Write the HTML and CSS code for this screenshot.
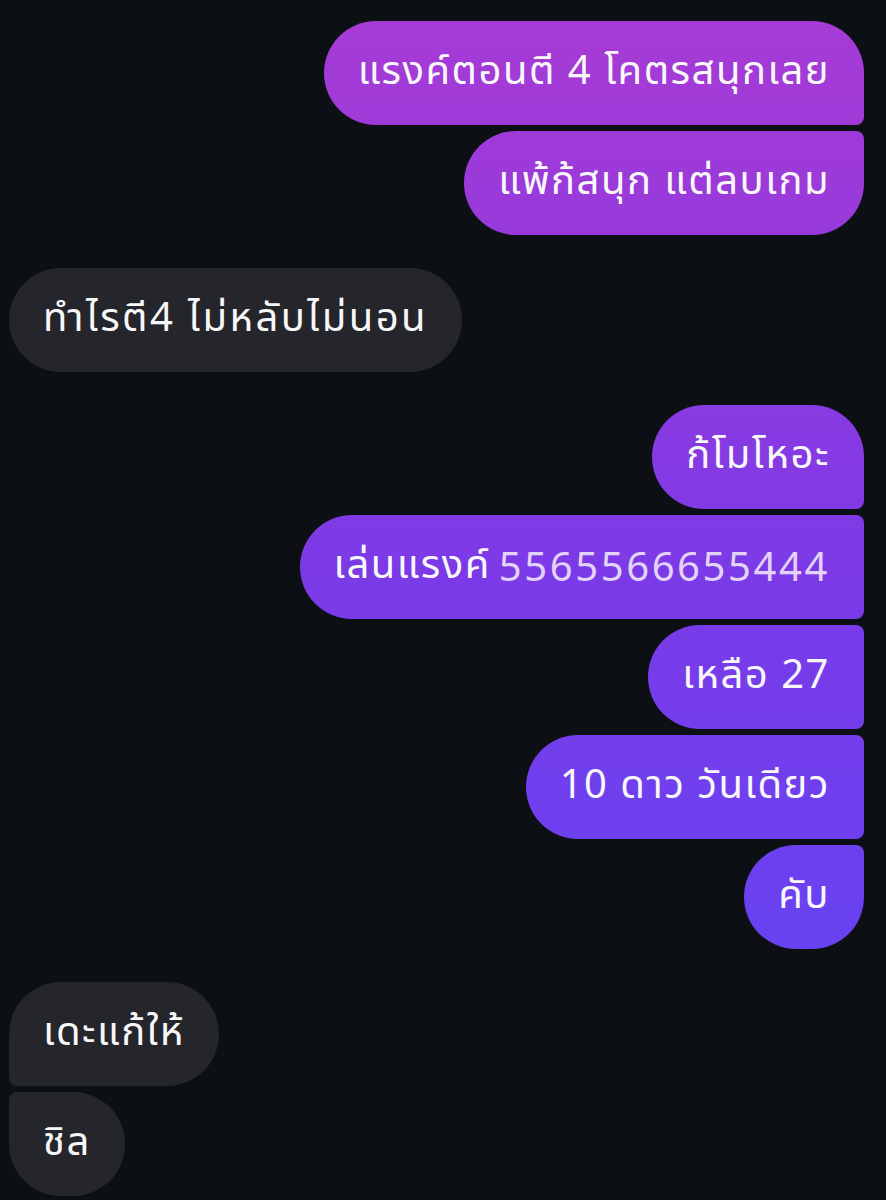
FILE: index.html
```html
<!DOCTYPE html>
<html lang="th">
	<head>
		<meta charset="UTF-8" />
		<meta name="viewport" content="width=device-width, initial-scale=1.0" />
		<title>แชท</title>
		<link rel="stylesheet" href="styles.css">
	</head>
	<body>
		<div class="chat">
			<div class="group out">
				<div class="msg first">แรงค์ตอนตี 4 โคตรสนุกเลย</div>
				<div class="msg last">แพ้ก้สนุก แต่ลบเกม</div>
			</div>

			<div class="group in">
				<div class="msg first last wide">ทำไรตี4 ไม่หลับไม่นอน</div>
			</div>

			<div class="group out">
				<div class="msg first">ก้โมโหอะ</div>
				<div class="msg">เล่นแรงค์ <span class="num">5565566655444</span></div>
				<div class="msg">เหลือ 27</div>
				<div class="msg">10 ดาว วันเดียว</div>
				<div class="msg last">คับ</div>
			</div>

			<div class="group in">
				<div class="msg first">เดะแก้ให้</div>
				<div class="msg last">ชิล</div>
			</div>
		</div>
	</body>
</html>
```

FILE: styles.css
```css
html,
body {
	margin: 0;
	background-color: #0c0f14;
}
body {
	font-family: "Noto Sans", "Noto Sans Thai", sans-serif;
	color: #f7f7f9;
	overflow: hidden;
	height: 1200px;
}
.chat {
	display: flex;
	flex-direction: column;
	gap: 33px;
	padding: 21px 22px 0 9px;
}
.group {
	display: flex;
	flex-direction: column;
	gap: 6px;
}
.group.out {
	align-items: flex-end;
}
.group.in {
	align-items: flex-start;
}
.msg {
	height: 104px;
	box-sizing: border-box;
	padding: 0 34px 4px;
	display: flex;
	align-items: center;
	font-size: 40px;
	letter-spacing: 1.5px;
	white-space: nowrap;
	border-radius: 52px;
}
.out .msg {
	background: linear-gradient(to bottom, #a83bd5 0px, #9a3ada 200px, #7c3ae7 570px, #6842f2 950px) fixed;
	border-top-right-radius: 8px;
	border-bottom-right-radius: 8px;
}
.out .msg.first {
	border-top-right-radius: 52px;
}
.out .msg.last {
	border-bottom-right-radius: 52px;
}
.in .msg {
	background-color: #24262b;
	border-top-left-radius: 8px;
	border-bottom-left-radius: 8px;
}
.in .msg.first {
	border-top-left-radius: 52px;
}
.in .msg.last {
	border-bottom-left-radius: 52px;
}
.msg.wide {
	letter-spacing: 2.4px;
}
.num {
	color: #e4d3f8;
	margin-left: 0.2em;
	letter-spacing: 2.6px;
}
```
